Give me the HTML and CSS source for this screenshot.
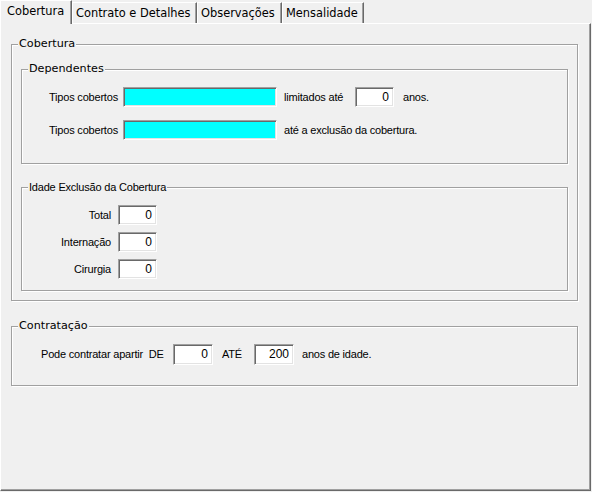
FILE: index.html
```html
<!DOCTYPE html>
<html lang="pt">
<head>
<meta charset="utf-8">
<title>Cobertura</title>
<link rel="stylesheet" href="styles.css">
</head>
<body>
<div class="tabs">
  <div class="tab tab-active tab-w1">Cobertura</div>
  <div class="tab tab-w2">Contrato e Detalhes</div>
  <div class="tab tab-w3">Observações</div>
  <div class="tab tab-w4">Mensalidade</div>
</div>
<div class="panel">
  <div class="group group-outer">
    <span class="group-title">Cobertura</span>
    <div class="group group-inner group-dep">
      <span class="group-title">Dependentes</span>
      <div class="row">
        <span class="lbl lbl-tipos">Tipos cobertos</span>
        <span class="field field-cyan"></span>
        <span class="lbl lbl-lim">limitados até</span>
        <span class="field field-num">0</span>
        <span class="lbl lbl-anos">anos.</span>
      </div>
      <div class="row row-2">
        <span class="lbl lbl-tipos">Tipos cobertos</span>
        <span class="field field-cyan"></span>
        <span class="lbl lbl-excl">até a exclusão da cobertura.</span>
      </div>
    </div>
    <div class="group group-inner group-idade">
      <span class="group-title group-title-small">Idade Exclusão da Cobertura</span>
      <div class="irow">
        <span class="ilbl">Total</span>
        <span class="field field-num">0</span>
      </div>
      <div class="irow">
        <span class="ilbl">Internação</span>
        <span class="field field-num">0</span>
      </div>
      <div class="irow">
        <span class="ilbl">Cirurgia</span>
        <span class="field field-num">0</span>
      </div>
    </div>
  </div>
  <div class="group group-outer group-contr">
    <span class="group-title">Contratação</span>
    <div class="row row-contr">
      <span class="lbl lbl-pode">Pode contratar apartir&nbsp; DE</span>
      <span class="field field-num field-wide">0</span>
      <span class="lbl lbl-ate">ATÉ</span>
      <span class="field field-num field-wide">200</span>
      <span class="lbl lbl-idade">anos de idade.</span>
    </div>
  </div>
</div>
</body>
</html>
```
FILE: styles.css
```css
html, body {
  margin: 0;
  padding: 0;
}
body {
  width: 592px;
  height: 492px;
  overflow: hidden;
  background: #f0f0f0;
  font-family: "Liberation Sans", Arial, sans-serif;
  font-size: 11px;
  letter-spacing: -0.2px;
  color: #000;
}

/* Tabs */
.tabs {
  display: flex;
  align-items: flex-end;
  height: 23px;
}
.tab {
  box-sizing: border-box;
  height: 21px;
  border-left: 1px solid #fff;
  border-top: 1px solid #fff;
  border-right: 1px solid #696969;
  box-shadow: inset -1px 0 0 #a0a0a0;
  background: #f0f0f0;
  padding: 3px 0 0 3px;
  font-family: "DejaVu Sans", Tahoma, sans-serif;
  font-size: 11.4px;
  letter-spacing: 0;
  line-height: 14px;
  white-space: nowrap;
}
.tab-active {
  height: 24px;
  margin-bottom: -1px;
  padding: 3px 0 0 6px;
  position: relative;
  z-index: 1;
}
.tab-w1 { width: 72px; }
.tab-w2 { width: 125px; }
.tab-w3 { width: 85px; }
.tab-w4 { width: 82px; }

/* Panel */
.panel {
  box-sizing: border-box;
  width: 591px;
  height: 468px;
  border-top: 1px solid #fff;
  border-left: 1px solid #fff;
  border-right: 1px solid #696969;
  border-bottom: 1px solid #696969;
  box-shadow: inset -1px -1px 0 #a0a0a0;
  padding: 20px 0 0 10px;
}

/* Group boxes */
.group {
  position: relative;
  box-sizing: border-box;
  border: 1px solid #a0a0a0;
  box-shadow: inset 1px 1px 0 #fff, 1px 1px 0 #fff;
}
.group-title {
  position: absolute;
  top: -8px;
  left: 6px;
  padding: 0 1px;
  background: #f0f0f0;
  font-family: "DejaVu Sans", Tahoma, sans-serif;
  font-size: 11.2px;
  letter-spacing: 0;
  line-height: 14px;
  white-space: nowrap;
}
.group-title-small {
  font-family: "Liberation Sans", Arial, sans-serif;
  font-size: 11px;
  letter-spacing: -0.2px;
}
.group-outer {
  width: 567px;
  padding: 0 9px 9px 9px;
}
.group-dep {
  margin-top: 24px;
  padding: 17px 0 23px 27px;
}
.group-idade {
  margin-top: 23px;
  padding: 17px 0 11px 0;
}
.group-contr {
  margin-top: 25px;
  padding: 17px 0 20px 29px;
}

/* Rows */
.row {
  display: flex;
  align-items: center;
  height: 20px;
  white-space: nowrap;
}
.row-2 {
  margin-top: 13px;
}
.row-contr {
  height: 21px;
}
.lbl {
  line-height: 13px;
}
.lbl-tipos { width: 74px; }
.lbl-lim { width: 71px; margin-left: 7px; }
.lbl-anos { margin-left: 9px; }
.lbl-excl { margin-left: 7px; }
.lbl-pode { width: 132px; }
.lbl-ate { width: 32px; margin-left: 9px; }
.lbl-idade { margin-left: 8px; }

.irow {
  display: flex;
  align-items: center;
  height: 20px;
  margin-bottom: 7px;
}
.irow:last-child {
  margin-bottom: 0;
}
.ilbl {
  width: 89px;
  margin-right: 7px;
  text-align: right;
  line-height: 13px;
}

/* Fields */
.field {
  box-sizing: border-box;
  display: block;
  height: 20px;
  background: #fff;
  border-top: 1px solid #a0a0a0;
  border-left: 1px solid #a0a0a0;
  border-right: 1px solid #fff;
  border-bottom: 1px solid #fff;
  box-shadow: inset 1px 1px 0 #696969, inset -1px -1px 0 #e3e3e3;
  line-height: 18px;
}
.field-cyan {
  width: 154px;
  background: #00ffff;
}
.field-num {
  width: 39px;
  text-align: right;
  padding-right: 4px;
  font-size: 12px;
  letter-spacing: 0;
}
.field-wide {
  width: 40px;
  height: 21px;
  line-height: 19px;
}
```
